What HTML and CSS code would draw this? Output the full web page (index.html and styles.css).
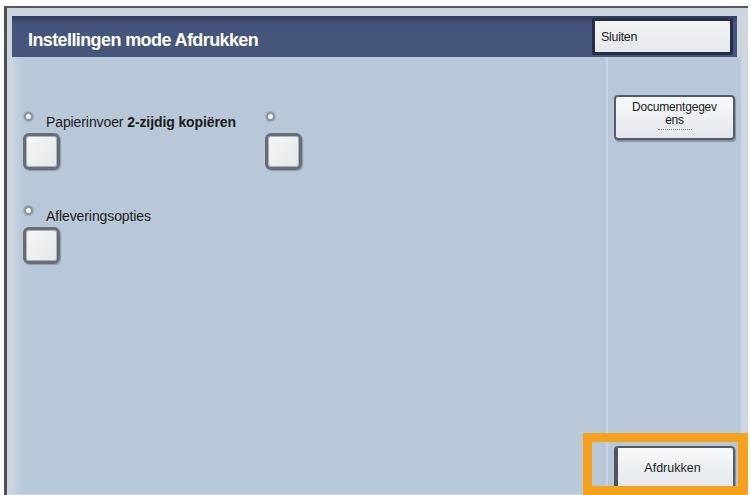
FILE: index.html
```html
<!DOCTYPE html>
<html lang="nl">
<head>
<meta charset="utf-8">
<title>Instellingen mode Afdrukken</title>
<link rel="stylesheet" href="styles.css">
</head>
<body>
<div class="frame">
  <header class="titlebar">
    <h1 class="title">Instellingen mode Afdrukken</h1>
    <button class="close">Sluiten</button>
  </header>
  <main class="panel">
    <section class="options">
      <div class="opt">
        <div class="opt-head"><span class="radio"></span><span class="label">Papierinvoer <b>2-zijdig kopiëren</b></span></div>
        <span class="check"></span>
      </div>
      <div class="opt">
        <div class="opt-head"><span class="radio"></span></div>
        <span class="check"></span>
      </div>
      <div class="opt">
        <div class="opt-head"><span class="radio"></span><span class="label">Afleveringsopties</span></div>
        <span class="check"></span>
      </div>
    </section>
    <aside class="side">
      <button class="sbtn doc"><span class="doc-line">Documentgegev</span><span class="doc-line">ens</span><span class="tiny"></span></button>
      <button class="sbtn print">Afdrukken</button>
    </aside>
  </main>
  <div class="highlight"></div>
</div>
</body>
</html>
```
FILE: styles.css
```css
html, body {
  margin: 0;
  padding: 0;
  overflow: hidden;
}
body {
  width: 751px;
  height: 495px;
  background: #ffffff;
  font-family: "Liberation Sans", Arial, sans-serif;
  position: relative;
}
.frame {
  margin: 6px 0 0 4px;
  width: 736px;
  height: 481px;
  border-left: 3px solid #4e5257;
  border-top: 2px solid #55595e;
  background: #cdd5df;
  padding: 8px 0 0 5px;
  display: flex;
  flex-direction: column;
}
.titlebar {
  width: 725px;
  height: 41px;
  box-sizing: border-box;
  background: linear-gradient(#303c5e, #45547a 18%, #47567b);
  display: flex;
  align-items: center;
  justify-content: space-between;
  padding: 0 4px 0 16px;
}
.title {
  margin: 0;
  padding-top: 7px;
  color: #ffffff;
  font-size: 18px;
  font-weight: bold;
  letter-spacing: -0.6px;
}
.close {
  width: 141px;
  height: 37px;
  box-sizing: border-box;
  border: 3px solid #252d48;
  border-radius: 2px;
  background: linear-gradient(#f3f4f6, #e6e9ed);
  font-family: "Liberation Sans", Arial, sans-serif;
  font-size: 12.5px;
  color: #1b1b1b;
  text-align: left;
  padding: 0 0 0 6px;
  letter-spacing: -0.3px;
}
.panel {
  width: 731px;
  flex: 1;
  display: flex;
  background: #b9c8d8;
  margin-bottom: 3px;
}
.options {
  width: 594px;
  box-sizing: border-box;
  padding: 55px 0 0 11px;
  display: grid;
  grid-template-columns: 242px 242px;
  row-gap: 36px;
  align-content: start;
  background: linear-gradient(90deg, #c6d3e2, #b9c8d8 12px);
}
.opt {
  display: flex;
  flex-direction: column;
  align-items: flex-start;
}
.opt-head {
  height: 16px;
  display: flex;
  align-items: flex-start;
}
.radio {
  width: 5px;
  height: 5px;
  margin: 0 0 0 1px;
  border-radius: 50%;
  border: 2px solid #8a949e;
  background: #f2f4f7;
  box-shadow: 0 0 1px 1px #a4adb6;
}
.label {
  margin-left: 13px;
  margin-top: 2px;
  font-size: 14px;
  line-height: 16px;
  color: #1a1a1a;
  letter-spacing: -0.1px;
  white-space: nowrap;
}
.label b {
  font-weight: bold;
}
.check {
  display: block;
  margin-top: 5px;
  width: 37px;
  height: 37px;
  box-sizing: border-box;
  border: 3px solid #686d75;
  border-radius: 6px;
  background: linear-gradient(135deg, #f6f7f3, #e3e7ec);
  box-shadow: inset 0 0 0 1px #a9b0b8, 1px 1px 1px rgba(60, 70, 80, 0.35);
}
.side {
  width: 133px;
  border-left: 2px solid #c9d6e3;
  border-right: 2px solid #c9d6e3;
  display: flex;
  flex-direction: column;
  align-items: center;
  padding: 38px 0 5px;
}
.sbtn {
  width: 121px;
  box-sizing: border-box;
  border: 2px solid #575d67;
  border-radius: 4px;
  background: linear-gradient(#f7f8fa, #e3e7ec);
  box-shadow: 1px 2px 1px rgba(40, 50, 60, 0.35);
  font-family: "Liberation Sans", Arial, sans-serif;
  color: #1b1b1b;
  padding: 0;
}
.doc {
  height: 45px;
  display: flex;
  flex-direction: column;
  align-items: center;
  justify-content: flex-start;
  padding-top: 3px;
}
.doc-line {
  display: block;
  font-size: 12px;
  line-height: 14px;
  height: 14px;
  letter-spacing: -0.2px;
}
.doc-line + .doc-line {
  margin-top: -1px;
}
.tiny {
  display: block;
  margin-top: 2px;
  width: 34px;
  height: 0;
  border-top: 1px dotted #8a8f96;
}
.print {
  margin-top: auto;
  height: 43px;
  border-left: 4px solid #4e545e;
  font-size: 12.5px;
  padding-right: 6px;
}
.highlight {
  position: absolute;
  left: 583px;
  top: 433px;
  width: 146px;
  height: 44px;
  border: 9px solid #f5a11c;
  border-right-width: 10px;
  pointer-events: none;
}
```
